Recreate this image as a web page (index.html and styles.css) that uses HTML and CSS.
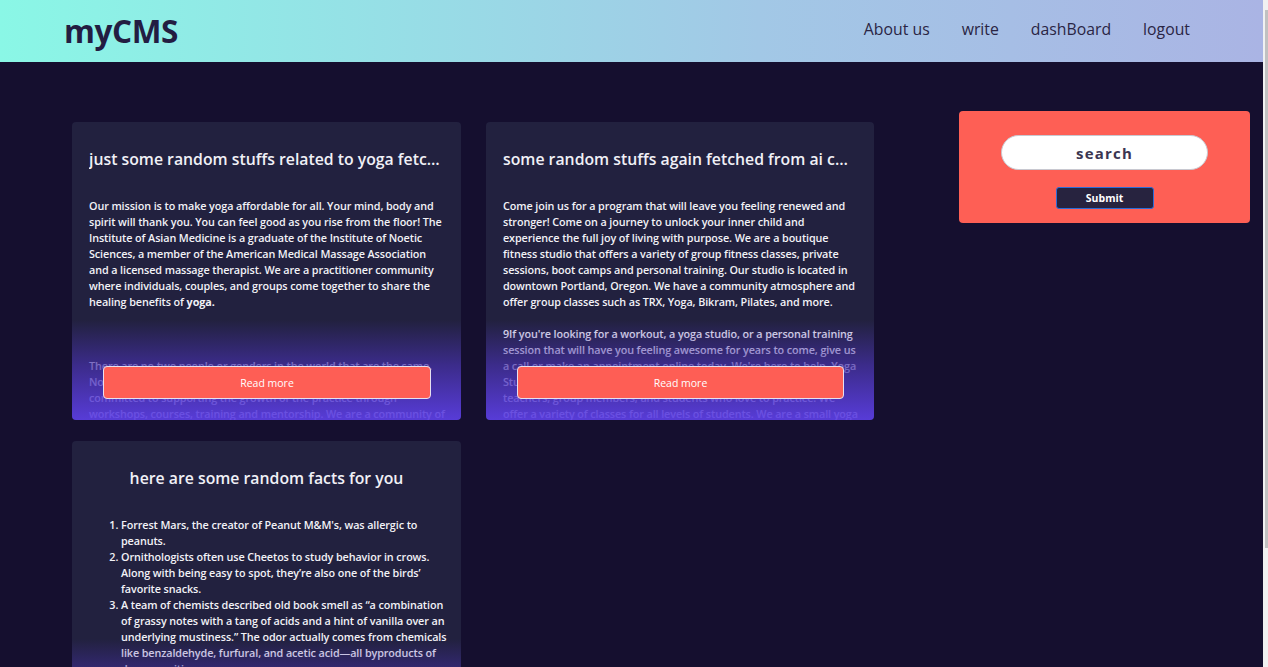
FILE: index.html
```html
<!DOCTYPE html>
<html>
<head>
<meta charset="utf-8">
<link rel="stylesheet" href="styles.css">
</head>
<body>
<header class="topbar">
  <div class="logo">myCMS</div>
  <nav class="nav">
    <a href="#">About us</a>
    <a href="#">write</a>
    <a href="#">dashBoard</a>
    <a href="#">logout</a>
  </nav>
</header>
<div class="page">
  <main class="posts">
    <article class="card">
      <h2 class="card-title">just some random stuffs related to yoga fetched from ai content generator</h2>
      <div class="card-body">
        <p>Our mission is to make yoga affordable for all. Your mind, body and<br>spirit will thank you. You can feel good as you rise from the floor! The<br>Institute of Asian Medicine is a graduate of the Institute of Noetic<br>Sciences, a member of the American Medical Massage Association<br>and a licensed massage therapist. We are a practitioner community<br>where individuals, couples, and groups come together to share the<br>healing benefits of <b>yoga.</b></p>
        <p class="gap3">There are no two people or genders in the world that are the same.<br>No two people have the same body type or flexibility. We are<br>committed to supporting the growth of the practice through<br>workshops, courses, training and mentorship. We are a community of<br>teachers and students.</p>
      </div>
      <div class="fade"></div>
      <button class="read-more">Read more</button>
    </article>
    <article class="card">
      <h2 class="card-title">some random stuffs again fetched from ai content generator</h2>
      <div class="card-body">
        <p>Come join us for a program that will leave you feeling renewed and<br>stronger! Come on a journey to unlock your inner child and<br>experience the full joy of living with purpose. We are a boutique<br>fitness studio that offers a variety of group fitness classes, private<br>sessions, boot camps and personal training. Our studio is located in<br>downtown Portland, Oregon. We have a community atmosphere and<br>offer group classes such as TRX, Yoga, Bikram, Pilates, and more.</p>
        <p class="gap1">9If you're looking for a workout, a yoga studio, or a personal training<br>session that will have you feeling awesome for years to come, give us<br>a call or make an appointment online today. We're here to help. Yoga<br>Studio is a community of yoga instructors, personal trainers,<br>teachers, group members, and students who love to practice. We<br>offer a variety of classes for all levels of students. We are a small yoga<br>studio.</p>
      </div>
      <div class="fade"></div>
      <button class="read-more">Read more</button>
    </article>
    <article class="card">
      <h2 class="card-title centered">here are some random facts for you</h2>
      <div class="card-body">
        <ol class="facts">
          <li>Forrest Mars, the creator of Peanut M&amp;M's, was allergic to<br>peanuts.</li>
          <li>Ornithologists often use Cheetos to study behavior in crows.<br>Along with being easy to spot, they’re also one of the birds’<br>favorite snacks.</li>
          <li>A team of chemists described old book smell as “a combination<br>of grassy notes with a tang of acids and a hint of vanilla over an<br>underlying mustiness.” The odor actually comes from chemicals<br>like benzaldehyde, furfural, and acetic acid—all byproducts of<br>decomposition.</li>
          <li>The first oranges weren’t orange. They were green.</li>
        </ol>
      </div>
      <div class="fade"></div>
      <button class="read-more">Read more</button>
    </article>
  </main>
  <aside class="sidebar">
    <form class="search-box">
      <input class="search-input" type="text" placeholder="search">
      <button class="submit" type="button">Submit</button>
    </form>
  </aside>
</div>
<div class="scrollbar"><div class="thumb"></div></div>
</body>
</html>
```
FILE: styles.css
```css
* { box-sizing: border-box; }
html, body { margin: 0; padding: 0; }
body {
  background: #150f2f;
  font-family: "Open Sans", "Noto Sans", sans-serif;
  color: #eeeef4;
  min-height: 790px;
  padding-right: 5px;
}
.topbar {
  height: 62px;
  display: flex;
  align-items: center;
  justify-content: space-between;
  padding: 0 73px 4px 64px;
  background: linear-gradient(90deg, #8af7e6 0%, #a2c8e6 60%, #aab4e4 100%);
}
.logo {
  font-family: "Open Sans", sans-serif;
  font-weight: 700;
  font-size: 31.5px;
  color: #231d42;
  letter-spacing: -0.4px;
  margin-top: 2px;
}
.nav { display: flex; gap: 32px; }
.nav a {
  text-decoration: none;
  color: #2a2544;
  font-size: 15.8px;
  font-weight: 500;
}
.page {
  display: flex;
  align-items: flex-start;
  padding: 0 13px 0 72px;
}
.posts {
  display: grid;
  grid-template-columns: 389px 388px;
  column-gap: 25px;
  row-gap: 21px;
  margin-top: 60px;
}
.sidebar {
  margin-left: auto;
  margin-top: 49px;
  width: 291px;
}
.card {
  position: relative;
  height: 298px;
  overflow: hidden;
  background: #22213f;
  border-radius: 4px;
  padding: 26px 17px 0 17px;
}
.card-title {
  margin: 0;
  font-size: 15.8px;
  font-weight: 600;
  line-height: 22px;
  color: #f0f0f6;
  white-space: nowrap;
  overflow: hidden;
  text-overflow: ellipsis;
}
.card-title.centered { text-align: center; }
.card-body {
  margin-top: 28px;
  font-size: 10.8px;
  font-weight: 600;
  letter-spacing: -0.1px;
  line-height: 16px;
  color: #f2f2f7;
  white-space: nowrap;
}
.card-body p { margin: 0; }
.card-body b { font-weight: 700; }
.card-body p.gap3 { margin-top: 48px; }
.card-body p.gap1 { margin-top: 16px; }
.facts { margin: 0; padding-left: 32px; }
.fade {
  position: absolute;
  left: 0; right: 0; bottom: 0;
  height: 100px;
  background: linear-gradient(to bottom, rgba(34,33,63,0) 0%, rgba(70,48,170,0.7) 45%, rgba(92,62,228,0.92) 100%);
}
.read-more {
  position: absolute;
  left: 31px;
  right: 30px;
  bottom: 21px;
  height: 33px;
  background: #fe5e55;
  border: 1px solid #e6e0f0;
  border-radius: 4px;
  color: #fff;
  font-family: "Open Sans", sans-serif;
  font-size: 10.5px;
  cursor: pointer;
}
.search-box {
  background: #fe5f55;
  border-radius: 4px;
  height: 112px;
  display: flex;
  flex-direction: column;
  align-items: center;
  padding-top: 24px;
}
.search-input {
  width: 207px;
  height: 35px;
  border-radius: 18px;
  border: 1px solid #c8c8d0;
  background: #fff;
  text-align: center;
  font-family: "Open Sans", sans-serif;
  font-size: 15px;
  font-weight: 700;
  letter-spacing: 1.2px;
  outline: none;
}
.search-input::placeholder { color: #3b3652; }
.submit {
  margin-top: 17px;
  width: 98px;
  height: 22px;
  background: #27233f;
  border: 1px solid #2b6cd8;
  border-radius: 3px;
  color: #fff;
  font-family: "Open Sans", sans-serif;
  font-size: 10.5px;
  font-weight: 700;
  padding: 0;
}
.scrollbar {
  position: fixed;
  top: 0;
  right: 0;
  width: 5px;
  height: 100%;
  background: #f1f1f1;
}
.thumb {
  position: absolute;
  top: 10px;
  right: 0;
  width: 3px;
  height: 538px;
  background: #c1c1c1;
}
```
